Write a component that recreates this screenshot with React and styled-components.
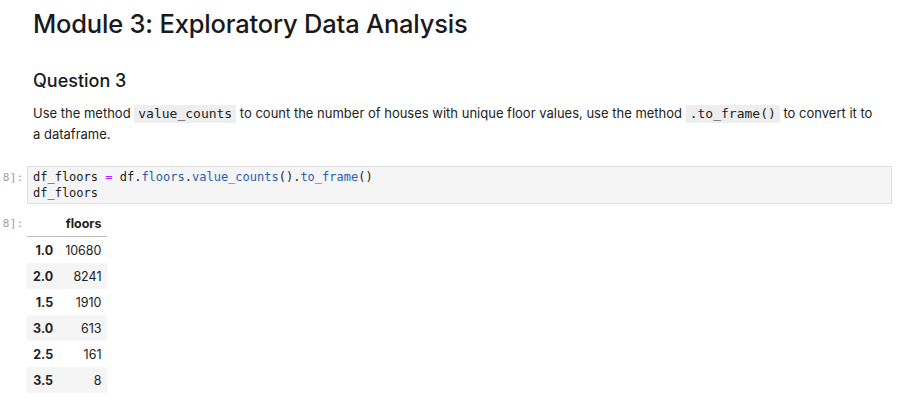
import React from "react";
import styled, { createGlobalStyle } from "styled-components";

const Global = createGlobalStyle`
  html, body { margin: 0; padding: 0; background: #fff; }
  body { width: 904px; height: 404px; overflow: hidden; font-family: Inter, "Noto Sans", sans-serif; color: #212121; }
`;

const Page = styled.div`
  display: flex;
  flex-direction: column;
  padding: 7px 12px 0 0;
`;

const Cell = styled.div`
  display: flex;
  align-items: flex-start;
`;

const Prompt = styled.div`
  width: 27px;
  flex: none;
  display: flex;
  justify-content: flex-end;
  font-family: "DejaVu Sans Mono", monospace;
  font-size: 11px;
  color: #9e9e9e;
  padding-top: ${p => p.$top || 0}px;
  letter-spacing: 0.5px;
  box-sizing: border-box;
  padding-right: 3px;
  overflow: hidden;
  white-space: nowrap;
`;

const Markdown = styled.div`
  flex: 1;
  padding: 0 18px 0 6px;
`;

const H1 = styled.h1`
  margin: 0 0 28px;
  font-size: 25.5px;
  font-weight: 500;
  letter-spacing: -0.2px;
  line-height: 34px;
  color: #1a1a1a;
`;

const H2 = styled.h2`
  margin: 0 0 10px;
  font-size: 18px;
  font-weight: 500;
  line-height: 24px;
  color: #1a1a1a;
`;

const P = styled.p`
  margin: 0 0 21px;
  font-size: 13px;
  line-height: 21px;
  color: #222;
`;

const Code = styled.code`
  display: inline-block;
  font-family: "DejaVu Sans Mono", monospace;
  font-size: 13px;
  line-height: 18px;
  background: #eeeeee;
  padding: 0 4px;
  color: #222;
`;

const Input = styled.pre`
  flex: 1;
  margin: 0;
  background: #f5f5f5;
  border: 1px solid #e0e0e0;
  padding: 2px 5px;
  font-family: "DejaVu Sans Mono", monospace;
  font-size: 12px;
  line-height: 16px;
  color: #222;
`;

const Tok = styled.span`
  color: ${p => (p.$k === "op" ? "#aa22ff" : p.$k === "prop" ? "#2a5db0" : "inherit")};
`;

const Output = styled.div`
  flex: 1;
  padding: 6px 0 0 0;
`;

const Table = styled.table`
  border-collapse: collapse;
  font-size: 12.5px;
  color: #222;
`;

const Th = styled.th`
  font-weight: 700;
  text-align: right;
  padding: 0 6px;
  height: 26px;
  ${p => p.$head && "border-bottom: 1px solid #bdbdbd;"}
`;

const Td = styled.td`
  text-align: right;
  padding: 0 6px;
  height: 26px;
`;

const Tr = styled.tr`
  background: ${p => (p.$odd ? "#f5f5f5" : "transparent")};
`;

const rows = [
  ["1.0", "10680"],
  ["2.0", "8241"],
  ["1.5", "1910"],
  ["3.0", "613"],
  ["2.5", "161"],
  ["3.5", "8"],
];

export default function App() {
  return (
    <>
      <Global />
      <Page>
        <Cell>
          <Prompt />
          <Markdown>
            <H1>Module 3: Exploratory Data Analysis</H1>
            <H2>Question 3</H2>
            <P>
              Use the method <Code>value_counts</Code> to count the number of houses with unique floor values, use the method{" "}
              <Code>.to_frame()</Code> to convert it to a dataframe.
            </P>
          </Markdown>
        </Cell>
        <Cell>
          <Prompt $top={5}>8]:</Prompt>
          <Input>
            df_floors <Tok $k="op">=</Tok> df.<Tok $k="prop">floors</Tok>.<Tok $k="prop">value_counts</Tok>().
            <Tok $k="prop">to_frame</Tok>(){"\n"}df_floors
          </Input>
        </Cell>
        <Cell>
          <Prompt $top={13}>8]:</Prompt>
          <Output>
            <Table>
              <thead>
                <tr>
                  <Th $head></Th>
                  <Th $head>floors</Th>
                </tr>
              </thead>
              <tbody>
                {rows.map((r, i) => (
                  <Tr key={r[0]} $odd={i % 2 === 1}>
                    <Th>{r[0]}</Th>
                    <Td>{r[1]}</Td>
                  </Tr>
                ))}
              </tbody>
            </Table>
          </Output>
        </Cell>
      </Page>
    </>
  );
}
